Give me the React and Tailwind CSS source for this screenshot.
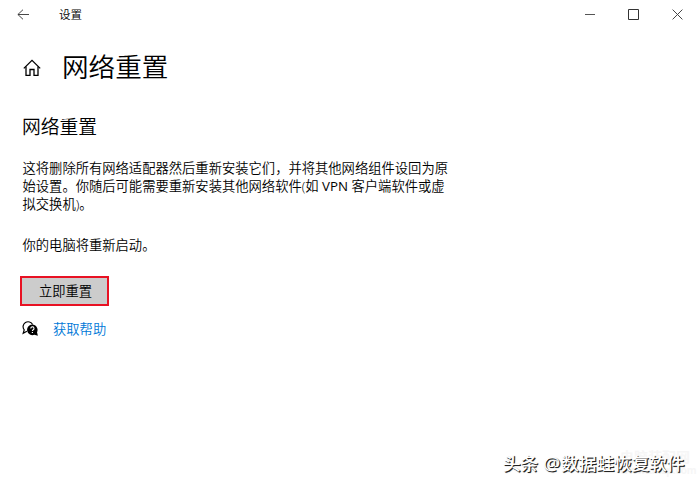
import React from 'react';

const BackIcon = () => (
    <svg width="13" height="12" viewBox="0 0 13 12" fill="none" stroke="#333" strokeWidth="0.9">
        <path d="M6 0.7L0.9 5.5L6 10.3M0.9 5.5H12" />
    </svg>
);

const HomeIcon = () => (
    <svg width="18" height="18" viewBox="0 0 18 18" fill="none" stroke="#000" strokeWidth="1.3">
        <path d="M0.8 9.4L9 1.4L17.2 9.4" />
        <path d="M3 7.5V16.3H7V10.5H11V16.3H15V7.5" />
    </svg>
);

const HelpIcon = () => (
    <svg width="17" height="16" viewBox="0 0 17 16" fill="none">
        <path d="M4.9 10.2L1.2 12.3L2.2 8.9A5 5 0 1 1 10.6 3.6" stroke="#000" strokeWidth="1.2" />
        <path d="M10.3 3.6a5.3 5.3 0 0 1 4.7 7.7l0.9 3.5-3.5-1A5.3 5.3 0 1 1 10.3 3.6z" fill="#000" />
        <path d="M8.8 7.5a1.6 1.6 0 1 1 2.4 1.3c-.6.4-.8.6-.8 1.3" stroke="#fff" strokeWidth="1.1" />
        <path d="M9.8 11h1.2v1.1H9.8z" fill="#fff" />
    </svg>
);

const TitleBar = () => (
    <header className="flex h-[30px] items-center justify-between pl-[17px] pr-[17px]">
        <div className="flex items-center gap-[29px]">
            <BackIcon />
            <span className="text-[11.5px] leading-[30px]">设置</span>
        </div>
        <div className="flex items-center gap-[33px] pb-px">
            <svg width="10" height="11" viewBox="0 0 10 11" stroke="#555"><path d="M0 5.5H10" /></svg>
            <svg width="11" height="11" viewBox="0 0 11 11" fill="none" stroke="#333"><path d="M0.5 0.5H10.5V10.5H0.5z" /></svg>
            <svg width="11" height="11" viewBox="0 0 11 11" stroke="#444"><path d="M0.6 0.6L10.4 10.4M10.4 0.6L0.6 10.4" /></svg>
        </div>
    </header>
);

export default function App() {
    return (
        <div className="relative h-[485px] w-[700px] overflow-hidden bg-white font-[350] text-black [font-family:'Open_Sans','Noto_Sans_CJK_SC',sans-serif]">
            <TitleBar />
            <main className="pl-[22px]">
                <div className="mt-[17px] flex h-[40px] items-center gap-[21px] pl-px">
                    <span className="pt-[2px]"><HomeIcon /></span>
                    <h1 className="text-[26.6px] leading-[40px] font-[350]">网络重置</h1>
                </div>
                <h2 className="mt-[26px] text-[18.8px] leading-[28px] font-[350]">网络重置</h2>
                <div className="mt-[18px] pl-[0.5px] text-[13.3px] leading-[18px]">
                    <p>这将删除所有网络适配器然后重新安装它们，并将其他网络组件设回为原</p>
                    <p>始设置。你随后可能需要重新安装其他网络软件(如 <span className="font-normal">VPN</span> 客户端软件或虚</p>
                    <p>拟交换机)。</p>
                </div>
                <p className="mt-[23px] pl-[0.5px] text-[13.3px] leading-[18px]">你的电脑将重新启动。</p>
                <button className="-ml-[2px] mt-[22px] flex h-[30px] w-[89px] items-center justify-center border-2 border-[#e81123] bg-[#cccccc] pl-[2px] pt-[2px] text-[13.3px]">
                    立即重置
                </button>
                <div className="mt-[13px] flex h-[20px] items-center gap-[14px]">
                    <HelpIcon />
                    <a className="text-[13.3px] leading-[20px] text-[#0078d7]">获取帮助</a>
                </div>
            </main>

            {/* Водяные знаки поверх страницы */}
            <div className="absolute left-[620px] top-[449px] text-[14px] leading-[15px] font-bold text-[#f6f6f6]">
                <p>电脑装配网</p>
                <p className="text-[10px] leading-[12px]">www.dnzp.com</p>
            </div>
            <div className="absolute left-[503px] top-[451px] flex whitespace-nowrap text-[17.6px] leading-[24px] font-medium text-white [text-shadow:1px_1px_0_#222,1px_1px_1px_#555]">
                <span className="mr-[5px]">头条</span>
                <span className="mr-px text-[19px] font-normal">@</span>
                <span>数据蛙恢复软件</span>
            </div>
        </div>
    );
}
